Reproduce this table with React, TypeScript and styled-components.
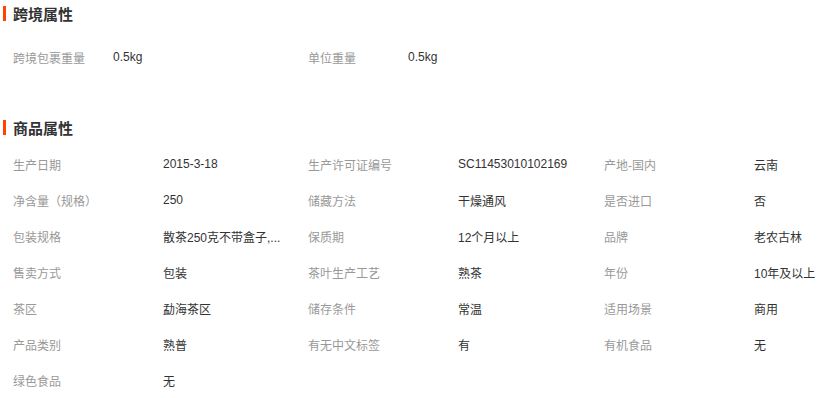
import React from "react";
import styled, { createGlobalStyle } from "styled-components";

const Global = createGlobalStyle`
  html, body { margin: 0; padding: 0; background: #fff; overflow: hidden; }
  body {
    font-family: "Liberation Sans", "Noto Sans CJK SC", sans-serif;
    font-size: 12px;
    color: #333;
  }
`;

const Page = styled.div`
  width: 824px;
  display: flex;
  flex-direction: column;
`;

const Section = styled.section<{ $top: number }>`
  margin-top: ${(p) => p.$top}px;
  display: flex;
  flex-direction: column;
`;

const Title = styled.h3`
  margin: 0;
  height: 30px;
  box-sizing: border-box;
  padding: 0 0 4px 3px;
  display: flex;
  align-items: center;
  gap: 7px;
  font-family: "Noto Sans CJK SC", sans-serif;
  font-size: 15px;
  font-weight: 700;
  color: #333;
  &::before {
    content: "";
    display: block;
    width: 3px;
    height: 15px;
    background: #ff4400;
  }
`;

const Grid = styled.div<{ $top: number }>`
  margin-top: ${(p) => p.$top}px;
  padding-left: 13px;
  display: grid;
  grid-template-columns: 295px 296px 1fr;
  grid-auto-rows: 36px;
`;

const Item = styled.div`
  display: flex;
  align-items: center;
  min-width: 0;
`;

const Label = styled.span<{ $w: number }>`
  flex: 0 0 ${(p) => p.$w}px;
  color: #999;
  white-space: nowrap;
`;

const Value = styled.span`
  width: 125px;
  color: #333;
  white-space: nowrap;
  overflow: hidden;
`;

type Attr = [string, string];

const cross: Attr[] = [
  ["跨境包裹重量", "0.5kg"],
  ["单位重量", "0.5kg"],
];

const goods: Attr[] = [
  ["生产日期", "2015-3-18"],
  ["生产许可证编号", "SC11453010102169"],
  ["产地-国内", "云南"],
  ["净含量（规格）", "250"],
  ["储藏方法", "干燥通风"],
  ["是否进口", "否"],
  ["包装规格", "散茶250克不带盒子,..."],
  ["保质期", "12个月以上"],
  ["品牌", "老农古林"],
  ["售卖方式", "包装"],
  ["茶叶生产工艺", "熟茶"],
  ["年份", "10年及以上"],
  ["茶区", "勐海茶区"],
  ["储存条件", "常温"],
  ["适用场景", "商用"],
  ["产品类别", "熟普"],
  ["有无中文标签", "有"],
  ["有机食品", "无"],
  ["绿色食品", "无"],
];

export default function App() {
  return (
    <Page>
      <Global />
      <Section $top={0}>
        <Title>跨境属性</Title>
        <Grid $top={9}>
          {cross.map(([k, v]) => (
            <Item key={k}>
              <Label $w={100}>{k}</Label>
              <Value>{v}</Value>
            </Item>
          ))}
        </Grid>
      </Section>
      <Section $top={39}>
        <Title>商品属性</Title>
        <Grid $top={2}>
          {goods.map(([k, v]) => (
            <Item key={k}>
              <Label $w={150}>{k}</Label>
              <Value>{v}</Value>
            </Item>
          ))}
        </Grid>
      </Section>
    </Page>
  );
}
